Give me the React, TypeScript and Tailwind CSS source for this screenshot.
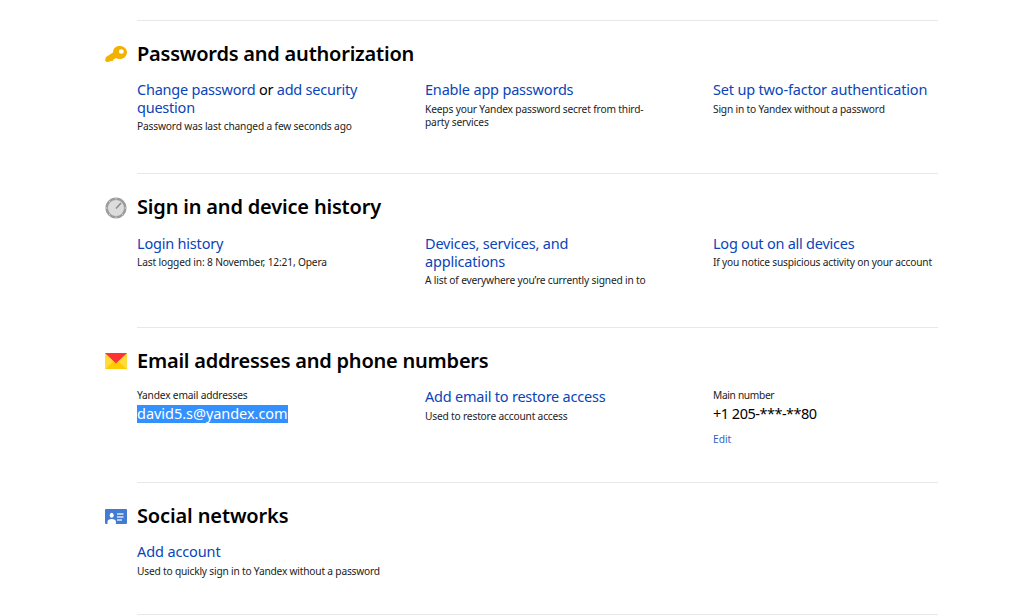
import type { ReactNode } from "react";

const Link = ({ children, className = "" }: { children: ReactNode; className?: string }) => (
  <a href="#" className={`text-[#0a44b8] ${className}`}>{children}</a>
);

const Title = ({ children, className = "" }: { children: ReactNode; className?: string }) => (
  <div className={`whitespace-nowrap text-[14.5px] leading-[17.7px] ${className}`}>{children}</div>
);

const Note = ({ children, className = "" }: { children: ReactNode; className?: string }) => (
  <p className={`whitespace-nowrap text-[10.2px] leading-[13.3px] text-[#222] ${className}`}>{children}</p>
);

function Section({ icon, title, titleClass, height, children }: {
  icon: ReactNode; title: string; titleClass: string; height: string; children: ReactNode;
}) {
  return (
    <section className={`flex ${height}`}>
      <div className="w-8 shrink-0 pt-[22px]">
        <div className="flex h-6 items-center">{icon}</div>
      </div>
      <div className="w-[801px] border-t border-[#e8e8e8] pt-[18px]">
        <h2 className={`h-[31px] whitespace-nowrap text-[20px] font-semibold leading-[30px] text-black ${titleClass}`}>{title}</h2>
        <div className="grid grid-cols-[288px_288px_225px] pt-[11px]">{children}</div>
      </div>
    </section>
  );
}

const KeyIcon = () => (
  <svg width="22" height="16" viewBox="0 0 22 16">
    <path fill="#f2b200" fillRule="evenodd" d="M14.500 0C18.700 0 22 2.600 22 6.300s-3.100 6.800-7.200 6.800c-1.600 0-2.600-.4-3.600-1l-2.500 1.100-.8 1.600-2 .1-.8.7-3.500.5L0 14.200 1 11l7-4.600C8.100 2.400 10.900 0 14.500 0Zm1.800 3.200a2.500 2.300 0 1 0 0 4.600 2.500 2.300 0 0 0 0-4.600Z" />
  </svg>
);

const DialIcon = () => (
  <svg className="mt-[2px]" width="22" height="22" viewBox="0 0 22 22">
    <circle cx="11" cy="11" r="9.300" fill="#dcdcdc" stroke="#9c9c9c" strokeWidth="2.600" />
    <path d="M11 0v2.500M11 19.500v2.500M0 11h2.500M19.500 11h2.500M3.200 3.200l1.800 1.800M17 17l1.800 1.800M3.200 18.800l1.800-1.800" stroke="#dadada" strokeWidth="1" />
    <path d="m11 11.500 5-5.500" stroke="#8a8a8a" strokeWidth="1.500" />
  </svg>
);

const MailIcon = () => (
  <svg width="22" height="16" viewBox="0 0 22 16">
    <path fill="#ffdc3b" d="M0 0h22v16H0z" />
    <path fill="#fc0" d="m0 16 8-7h6l8 7z" />
    <path fill="#ff3333" d="M0 0h22L11 10.500z" />
  </svg>
);

const CardIcon = () => (
  <svg width="22" height="15" viewBox="0 0 22 15">
    <path fill="#437bd0" d="M1 0h20q1 0 1 1v13q0 1-1 1H1q-1 0-1-1V1q0-1 1-1Z" />
    <ellipse cx="6.700" cy="6.200" rx="2" ry="2.500" fill="#fff" />
    <path fill="#fff" d="M2.500 15v-2.200c0-1.800 1.700-2.800 4.200-2.800s4.200 1 4.200 2.800V15z" />
    <path d="M12 5h6.500M12 8h6.500M12 11h5" stroke="#dce8fa" strokeWidth="1.300" />
  </svg>
);

export default function App() {
  return (
    <main className="h-[616px] overflow-hidden bg-white pl-[105px] pt-5 font-['Noto_Sans',sans-serif] text-black">
      <Section icon={<KeyIcon />} title="Passwords and authorization" titleClass="tracking-[-0.22px]" height="h-[153px]">
        <div>
          <Title className="tracking-[-0.23px]"><Link>Change password</Link> or <Link>add security<br />question</Link></Title>
          <Note className="pt-1 tracking-[-0.16px]">Password was last changed a few seconds ago</Note>
        </div>
        <div>
          <Title className="tracking-[-0.19px]"><Link>Enable app passwords</Link></Title>
          <Note className="pt-1 tracking-[-0.16px]">Keeps your Yandex password secret from third-<br />party services</Note>
        </div>
        <div>
          <Title className="tracking-[-0.18px]"><Link>Set up two-factor authentication</Link></Title>
          <Note className="pt-1 tracking-[-0.19px]">Sign in to Yandex without a password</Note>
        </div>
      </Section>
      <Section icon={<DialIcon />} title="Sign in and device history" titleClass="tracking-[-0.18px]" height="h-[154px]">
        <div>
          <Title className="pt-px tracking-[-0.2px]"><Link>Login history</Link></Title>
          <Note className="pt-[3px] tracking-[-0.16px]">Last logged in: 8 November, 12:21, Opera</Note>
        </div>
        <div>
          <Title className="pt-px tracking-[-0.18px]"><Link>Devices, services, and<br />applications</Link></Title>
          <Note className="pt-1 tracking-[-0.18px]">A list of everywhere you’re currently signed in to</Note>
        </div>
        <div>
          <Title className="pt-px tracking-[-0.24px]"><Link>Log out on all devices</Link></Title>
          <Note className="pt-[3px] tracking-[-0.19px]">If you notice suspicious activity on your account</Note>
        </div>
      </Section>
      <Section icon={<MailIcon />} title="Email addresses and phone numbers" titleClass="tracking-[-0.22px]" height="h-[155px]">
        <div>
          <Note className="pt-px tracking-[-0.18px]">Yandex email addresses</Note>
          <Title className="pt-[3px] tracking-[-0.04px]"><span className="inline-block h-[18px] bg-[#3390ff] text-white">david5.s@yandex.com</span></Title>
        </div>
        <div>
          <Title className="tracking-[-0.22px]"><Link>Add email to restore access</Link></Title>
          <Note className="pt-1 tracking-[-0.18px]">Used to restore account access</Note>
        </div>
        <div>
          <Note className="pt-px tracking-[-0.33px]">Main number</Note>
          <Title className="pt-[3px] tracking-[-0.5px]">+1 205-***-**80</Title>
          <Note className="pt-2.5"><Link className="text-[#2f5fc4]">Edit</Link></Note>
        </div>
      </Section>
      <Section icon={<CardIcon />} title="Social networks" titleClass="tracking-[-0.13px]" height="h-[132px]">
        <div>
          <Title className="tracking-[-0.12px]"><Link>Add account</Link></Title>
          <Note className="pt-1 tracking-[-0.2px]">Used to quickly sign in to Yandex without a password</Note>
        </div>
      </Section>
      <div className="ml-8 w-[801px] border-t border-[#e8e8e8]" />
    </main>
  );
}
